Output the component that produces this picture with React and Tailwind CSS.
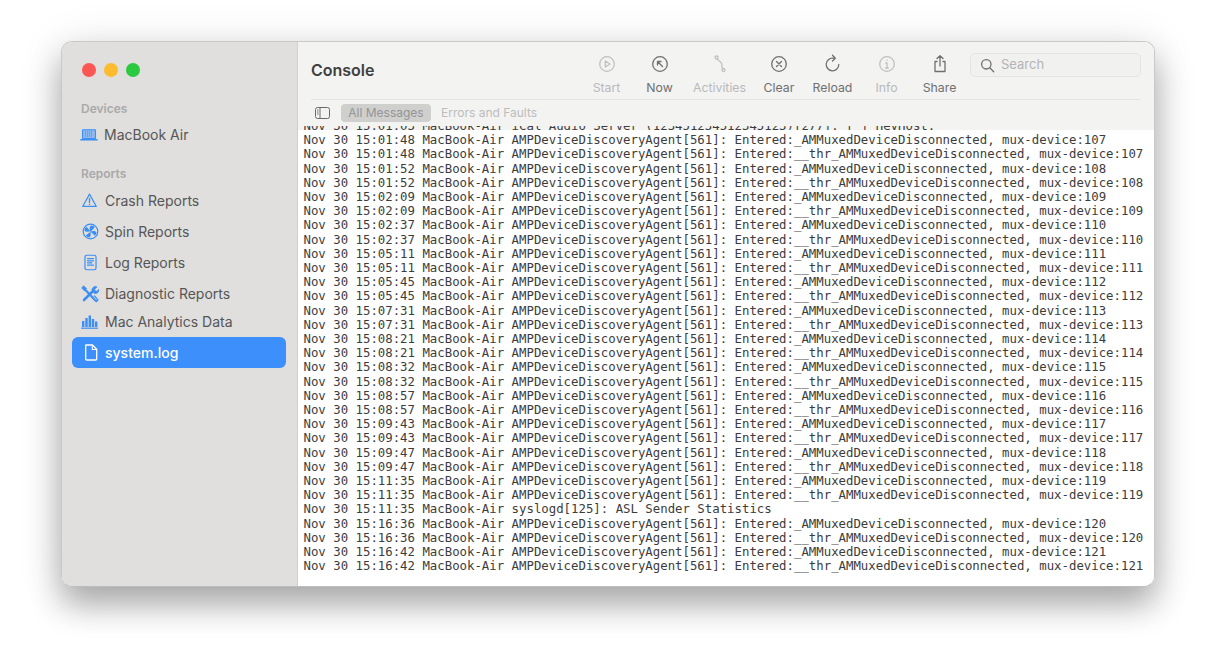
const B = "#3b8ef5";
const Ic = ({ children, w = 20, h = 20, cls = "" }) => (
  <svg width={w} height={h} viewBox="0 0 20 20" fill="none" stroke="currentColor" strokeWidth="1.3" strokeLinecap="round" strokeLinejoin="round" className={cls}>{children}</svg>
);
const Laptop = () => (
  <svg width="18" height="12" viewBox="0 0 18 12" fill="none" stroke={B} strokeWidth="1.1" className="-ml-[2px]">
    <rect x="2.5" y="0.8" width="13" height="8.7" rx="0.6" fill="#8db9ee" />
    <path d="M5 3h8M5 5h8M5 7h8" stroke={B} strokeDasharray="1 1" />
    <path d="M0.3 10.7h17.4" strokeWidth="1.4" />
  </svg>
);
const Warn = () => (
  <Ic w={17} h={17} cls="-ml-[1px]"><path d="M10 2.5 18 17H2Z" stroke={B} strokeWidth="1.4" /><path d="M10 7.5v5" stroke={B} strokeWidth="1.6" /><circle cx="10" cy="14.6" r=".8" fill={B} stroke="none" /></Ic>
);
const Spin = () => (
  <Ic w={17} h={17}>
    <circle cx="10" cy="10" r="8.6" stroke={B} strokeWidth="1.4" />
    <path d="M10 10C9 7 8 4.5 11 3c2 .2 3 1 4 2-2 2-3 4-5 5ZM10 10c3-1 5.5-1 7 1 0 2-1 3-2 4-2-2-3-3-5-5ZM10 10c0 3 1 5-1 7-2 0-3.5-1-4.5-2 2-2 3.5-3 5.5-5ZM10 10C7 10 5 11 3 9c0-2 1-3.5 2-4.5 2 2 3.5 3.5 5 5.5Z" fill={B} stroke="none" />
  </Ic>
);
const Doc = () => (
  <Ic w={17} h={19}>
    <rect x="3.5" y="1.5" width="13" height="17" rx="2" stroke={B} strokeWidth="1.4" />
    <path d="M6.5 5.5h7M6.5 8h7M6.5 10.5h5M6.5 13h7" stroke={B} strokeWidth="1.5" />
  </Ic>
);
const Tools = () => (
  <svg width="18" height="18" viewBox="0 0 18 18" fill="none" stroke={B} strokeLinecap="round" className="-ml-[1px]">
    <path d="M3 15 12 6" strokeWidth="2.6" />
    <path d="M11 4.5a3.4 3.4 0 0 1 4.8-2.6L13.5 4.2l.5 1.8 1.8.5 2-2a3.4 3.4 0 0 1-5 3.5" fill={B} strokeWidth="1" />
    <path d="M14.5 15.5 3.5 4" strokeWidth="2.2" />
    <path d="M1 2.5 2.5 1l3 2.5-2 2Z" fill={B} strokeWidth="1" />
    <path d="M12 12.5l3.5 4 1.5-1.5-3.5-4" fill="#e0dfde" strokeWidth="1.2" />
  </svg>
);
const Bars = () => (
  <svg width="17" height="14" viewBox="0 0 17 14" fill={B} className="-ml-[1px]">
    <rect x="1" y="6" width="2.4" height="6" />
    <rect x="4.3" y="3" width="2.4" height="9" />
    <rect x="7.6" y="0.5" width="2.4" height="11.5" />
    <rect x="10.8" y="4" width="2.4" height="8" />
    <rect x="14" y="6.5" width="2.4" height="5.5" />
    <rect x="0" y="12.6" width="17" height="1.2" />
  </svg>
);
const File = () => (
  <svg width="14" height="17" viewBox="0 0 14 17" fill="none" stroke="#fff" strokeLinejoin="round" className="ml-[2px]">
    <path d="M1.7 1h6.8L12.7 5.3V15a1 1 0 0 1-1 1H2.700a1 1 0 0 1-1-1Z" strokeWidth="1.3" />
    <path d="M8.3 1.2v4.3h4.3" strokeWidth="1.1" />
  </svg>
);

const SideItem = ({ icon, label, cls = "h-[31px]", iconW = "w-[23px]" }) => (
  <div className={`flex items-center pl-[20px] ${cls}`}>
    <div className={`${iconW} flex justify-start shrink-0`}>{icon}</div>
    <span className="text-[14px] text-[#565656]">{label}</span>
  </div>
);

const Tool = ({ label, on, w, children }) => (
  <div className={`flex flex-col items-center shrink-0 ${w} ${on ? "text-[#6f6f6f]" : "text-[#c0c0c0]"}`}>
    <div className="h-[24px] flex items-center justify-center">{children}</div>
    <span className={`mt-[4px] text-[12.3px] leading-[16px] ${on ? "text-[#707070]" : "text-[#b9b9b9]"}`}>{label}</span>
  </div>
);

const events = [
  ["15:01:48", 107], ["15:01:52", 108], ["15:02:09", 109], ["15:02:37", 110], ["15:05:11", 111],
  ["15:05:45", 112], ["15:07:31", 113], ["15:08:21", 114], ["15:08:32", 115], ["15:08:57", 116],
  ["15:09:43", 117], ["15:09:47", 118], ["15:11:35", 119], ["S"], ["15:16:36", 120], ["15:16:42", 121],
];
const lines = [];
events.forEach(([t, n]) => {
  if (t === "S") { lines.push("Nov 30 15:11:35 MacBook-Air syslogd[125]: ASL Sender Statistics"); return; }
  const p = `Nov 30 ${t} MacBook-Air AMPDeviceDiscoveryAgent[561]: Entered:`;
  lines.push(`${p}_AMMuxedDeviceDisconnected, mux-device:${n}`);
  lines.push(`${p}__thr_AMMuxedDeviceDisconnected, mux-device:${n}`);
});

export default function App() {
  return (
    <div className="w-[1216px] h-[669px] bg-white overflow-hidden p-[41px_61px_82px_61px] font-['Inter','Liberation_Sans',sans-serif]">
      <div className="h-full flex rounded-[11px] overflow-hidden border border-[#c9c9c9] border-b-[#bdbdbd] shadow-[0_18px_32px_rgba(0,0,0,0.30),0_4px_48px_rgba(0,0,0,0.10)]">
        <aside className="w-[236px] shrink-0 bg-[#e0dfde] flex flex-col border-r border-[#d0cfce]">
          <div className="flex gap-[8px] pl-[20px] pt-[21px]">
            <span className="w-[14px] h-[14px] rounded-full bg-[#fc5753]" />
            <span className="w-[14px] h-[14px] rounded-full bg-[#fdbc2e]" />
            <span className="w-[14px] h-[14px] rounded-full bg-[#2ac93f]" />
          </div>
          <div className="mt-[24px] pl-[19px] text-[12px] leading-[16px] font-semibold text-[#a9a9a9]">Devices</div>
          <SideItem cls="h-[31px] mt-[2px]" iconW="w-[22px]" icon={<Laptop />} label="MacBook Air" />
          <div className="mt-[16px] pl-[19px] text-[12px] leading-[16px] font-semibold text-[#a9a9a9]">Reports</div>
          <div className="mt-[3px] flex flex-col">
            <SideItem icon={<Warn />} label="Crash Reports" />
            <SideItem icon={<Spin />} label="Spin Reports" />
            <SideItem icon={<Doc />} label="Log Reports" />
            <SideItem icon={<Tools />} label="Diagnostic Reports" />
            <SideItem cls="h-[25px]" icon={<Bars />} label="Mac Analytics Data" />
          </div>
          <div className="mx-[10px] mt-[3px] h-[31px] w-[214px] rounded-[6px] bg-[#3d8ffb] flex items-center pl-[10px]">
            <div className="w-[23px] flex justify-start"><File /></div>
            <span className="text-[14px] font-medium text-white">system.log</span>
          </div>
        </aside>
        <main className="flex-1 min-w-0 flex flex-col bg-white">
          <header className="h-[84px] shrink-0 bg-[#f3f3f2] flex flex-col">
            <div className="h-[58px] flex items-start pl-[13px] pr-[13px] shrink-0">
              <h1 className="mt-[17px] text-[16px] leading-[22px] font-semibold text-[#3f3f3f]">Console</h1>
              <div className="flex-1" />
              <div className="flex items-start pt-[10px] mr-[4px]">
                <Tool label="Start" w="w-[53px]">
                  <Ic><circle cx="10" cy="10" r="7.3" /><path d="M8.3 7v6l4.7-3Z" /></Ic>
                </Tool>
                <Tool label="Now" on w="w-[53px]">
                  <Ic><circle cx="10" cy="10" r="7.3" /><path d="M7.5 7.5l5 5M7.5 11V7.5H11" /></Ic>
                </Tool>
                <Tool label="Activities" w="w-[67px]">
                  <Ic><circle cx="6.5" cy="3.5" r="1.5" /><circle cx="13.5" cy="16" r="1.5" /><path d="M7.3 5c1 2 4 2.5 4.5 5 .4 2-.6 2.5.8 4.7" /></Ic>
                </Tool>
                <Tool label="Clear" on w="w-[52px]">
                  <Ic><circle cx="10" cy="10" r="7.3" /><path d="m7.5 7.500 5 5M12.500 7.500l-5 5" /></Ic>
                </Tool>
                <Tool label="Reload" on w="w-[55px]">
                  <Ic><path d="M15.8 10.5A6.3 6.3 0 1 1 10 4.2h1.5" /><path d="M9.5 1.3 12.3 4.2 9.500 7" /></Ic>
                </Tool>
                <Tool label="Info" w="w-[53px]">
                  <Ic><circle cx="10" cy="10" r="7.3" /><path d="M10 9v5M8.7 14h2.600M8.800 9H10" /><circle cx="10" cy="6.3" r=".7" fill="currentColor" stroke="none" /></Ic>
                </Tool>
                <Tool label="Share" on w="w-[53px]">
                  <Ic><path d="M7 7.500H5v10h10v-10h-2M10 12V1.800M7 4.500l3-2.800 3 2.800" /></Ic>
                </Tool>
              </div>
              <div className="mt-[11px] w-[171px] h-[24px] rounded-[5px] border border-[#e4e4e3] bg-[#f1f1f0] flex items-center pl-[9px]">
                <svg width="15" height="15" viewBox="0 0 15 15" fill="none" stroke="#6f6f6f" strokeWidth="1.3" strokeLinecap="round"><circle cx="6.3" cy="6.3" r="4.7" /><path d="m9.8 9.8 3.900 3.900" /></svg>
                <span className="ml-[6px] text-[13px] text-[#b4b4b4]">Search</span>
              </div>
            </div>
            <div className="h-px mx-[13px] bg-[#e4e4e3] -mt-[1px] mr-[14px]" />
            <div className="flex-1 flex items-center pl-[17px]">
              <svg width="15" height="12" viewBox="0 0 15 12" fill="none" stroke="#6a6a6a" strokeWidth="1"><rect x=".5" y=".5" width="14" height="11" rx="2" /><path d="M5 .5v11" /><path d="M2 3h1.500M2 5h1.500M2 7h1.500" /></svg>
              <div className="ml-[11px] h-[18px] w-[90px] rounded-[4px] bg-[#cfcfce] flex items-center justify-center text-[12px] text-[#959595]">All Messages</div>
              <span className="ml-[10px] text-[12px] text-[#bcbcbc]">Errors and Faults</span>
            </div>
          </header>
          <div className="flex-1 min-h-0 overflow-hidden flex flex-col justify-end pb-[12.5px] font-['DejaVu_Sans_Mono',monospace] text-[12.35px] leading-[14.2px] text-[#3c3c3c]">
            <div className="h-[4px] shrink-0 mb-[2.9px] bg-[#f3f3f2] overflow-hidden flex items-end pl-[5.5px]">
              <div className="whitespace-pre shrink-0 -mb-[2.9px]">Nov 30 15:01:03 MacBook-Air iCal Audio Server (123451234512345123)[277]: [ ] HeyHost:</div>
            </div>
            {lines.map((l, i) => <div key={i} className="whitespace-pre shrink-0 pl-[5.5px]">{l}</div>)}
          </div>
        </main>
      </div>
    </div>
  );
}
